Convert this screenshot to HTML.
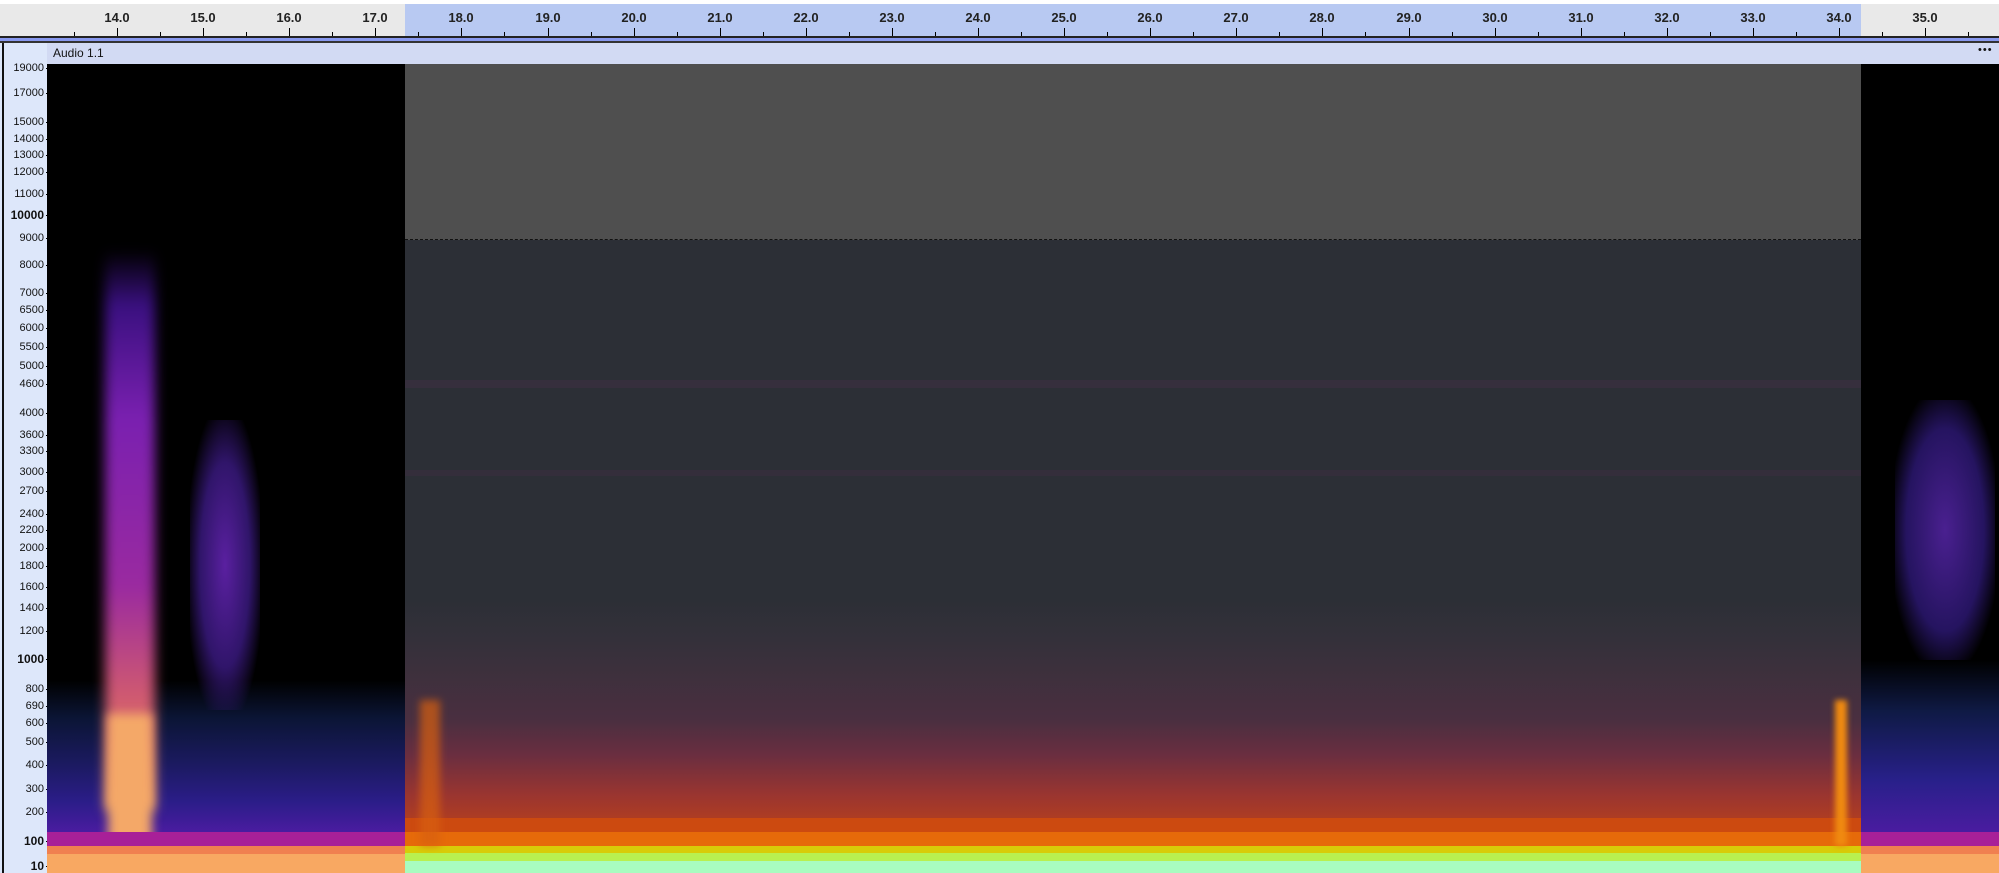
<!DOCTYPE html>
<html><head><meta charset="utf-8"><style>
*{margin:0;padding:0;box-sizing:border-box}
body{width:1999px;height:873px;overflow:hidden;background:#fff;font-family:"Liberation Sans",sans-serif;position:relative}
.a{position:absolute}
.tick{position:absolute;top:28px;width:1px;height:8px;background:#000}
.tick.s{top:32px;height:4px}
.rl{position:absolute;top:10px;font-size:13px;font-weight:bold;color:#222;transform:translateX(-50%)}
.fl{position:absolute;font-size:11px;color:#111;transform:translateY(-50%)}
.fl:after{content:"";position:absolute;right:-5px;top:50%;width:3px;height:1px;background:#000}
</style></head><body>
<div class="a" style="left:0;top:4px;width:1999px;height:33px;background:#e9e9e9"></div>
<div class="a" style="left:405px;top:4px;width:1456px;height:33px;background:#b8c9f2"></div>
<div class="a" style="left:0;top:36px;width:1999px;height:2px;background:#222"></div>
<div class="a" style="left:0;top:38px;width:1999px;height:3px;background:#8898ee"></div>
<div class="a" style="left:0;top:41px;width:1999px;height:2px;background:#333"></div>
<div id="ruler"></div>
<div class="a" style="left:0;top:43px;width:1999px;height:21px;background:#d2daf3"></div>
<div class="a" style="left:53px;top:46px;font-size:12px;color:#111">Audio 1.1</div>
<div class="a" style="left:1978px;top:44px;font-size:11px;color:#111;letter-spacing:1px">•••</div>
<div class="a" style="left:0;top:43px;width:47px;height:830px;background:#dde7fa"></div>
<div class="a" style="left:2px;top:43px;width:2px;height:830px;background:#111"></div>
<div id="freq"></div>
<div class="a" style="left:47px;top:64px;width:358px;height:809px;background:#000"></div>
<div class="a" style="left:47px;top:680px;width:358px;height:152px;background:linear-gradient(#000 0%,#0b1535 25%,#1b1a60 55%,#2b1d88 80%,#4a1ca0 100%)"></div>
<div class="a" style="left:105px;top:250px;width:50px;height:560px;background:linear-gradient(#10104000 0%,#3a1080 10%,#7a20b0 30%,#9a2aa0 60%,#d05a70 80%,#f0a060 100%);filter:blur(6px)"></div>
<div class="a" style="left:108px;top:714px;width:44px;height:132px;background:#f4a868;filter:blur(5px)"></div>
<div class="a" style="left:190px;top:420px;width:70px;height:290px;background:radial-gradient(ellipse at 50% 50%,#5a20a0 0%,#30156a 50%,#00000000 80%)"></div>
<div class="a" style="left:47px;top:832px;width:358px;height:14px;background:#a82098"></div>
<div class="a" style="left:47px;top:846px;width:358px;height:8px;background:#f08050"></div>
<div class="a" style="left:47px;top:854px;width:358px;height:19px;background:#f8a862"></div>
<div class="a" style="left:1861px;top:64px;width:138px;height:809px;background:#000"></div>
<div class="a" style="left:1861px;top:660px;width:138px;height:172px;background:linear-gradient(#000 0%,#0f1a45 30%,#28208a 70%,#4a1ca0 100%)"></div>
<div class="a" style="left:1895px;top:400px;width:100px;height:260px;background:radial-gradient(ellipse at 50% 50%,#4a2090 0%,#251460 55%,#00000000 80%)"></div>
<div class="a" style="left:1861px;top:832px;width:138px;height:14px;background:#a82098"></div>
<div class="a" style="left:1861px;top:846px;width:138px;height:8px;background:#f08050"></div>
<div class="a" style="left:1861px;top:854px;width:138px;height:19px;background:#f8a862"></div>
<div class="a" style="left:405px;top:64px;width:1456px;height:176px;background:#4f4f4f"></div>
<div class="a" style="left:405px;top:239px;width:1456px;height:1px;border-top:1px dashed #111"></div>
<div class="a" style="left:405px;top:240px;width:1456px;height:592px;background:linear-gradient(#2c2f36 0px,#2c2f36 360px,#34303a 400px,#4a2f40 480px,#6a2e40 515px,#9a3530 555px,#b8401c 590px)"></div>
<div class="a" style="left:405px;top:380px;width:1456px;height:8px;background:#3a2f40;opacity:.7"></div>
<div class="a" style="left:405px;top:470px;width:1456px;height:6px;background:#3a2f40;opacity:.6"></div>
<div class="a" style="left:405px;top:818px;width:1456px;height:14px;background:#cc4a10"></div>
<div class="a" style="left:405px;top:832px;width:1456px;height:14px;background:#e66a0a"></div>
<div class="a" style="left:405px;top:846px;width:1456px;height:7px;background:#d8cc08"></div>
<div class="a" style="left:405px;top:853px;width:1456px;height:8px;background:#b8f050"></div>
<div class="a" style="left:405px;top:861px;width:1456px;height:12px;background:#a8fcc0"></div>
<div class="a" style="left:1835px;top:700px;width:12px;height:146px;background:#f08a10;filter:blur(3px)"></div>
<div class="a" style="left:420px;top:700px;width:20px;height:146px;background:#d86010;filter:blur(4px);opacity:.7"></div>
<script>
var r=document.getElementById('ruler'),h='';
for(var t=13.5;t<=35.9;t+=0.5){var x=117+(t-14)*86.1;var maj=Math.abs(t-Math.round(t))<0.01;
h+='<div class="tick'+(maj?'':' s')+'" style="left:'+Math.round(x)+'px"></div>';
if(maj)h+='<div class="rl" style="left:'+Math.round(x)+'px">'+t.toFixed(1)+'</div>';}
r.innerHTML=h;
var f=[[19000,68],[17000,93],[15000,122],[14000,139],[13000,155],[12000,172],[11000,194],[10000,215],[9000,238],[8000,265],[7000,293],[6500,310],[6000,328],[5500,347],[5000,366],[4600,384],[4000,413],[3600,435],[3300,451],[3000,472],[2700,491],[2400,514],[2200,530],[2000,548],[1800,566],[1600,587],[1400,608],[1200,631],[1000,659],[800,689],[690,706],[600,723],[500,742],[400,765],[300,789],[200,812],[100,841],[10,866]];
h='';f.forEach(function(a){var b=(a[0]==10000||a[0]==1000||a[0]==100||a[0]==10);h+='<div class="fl" style="top:'+a[1]+'px;right:'+(1999-44)+'px;'+(b?'font-weight:bold;font-size:12px':'')+'">'+a[0]+'</div>';});
document.getElementById('freq').innerHTML=h;
</script>
</body></html>
